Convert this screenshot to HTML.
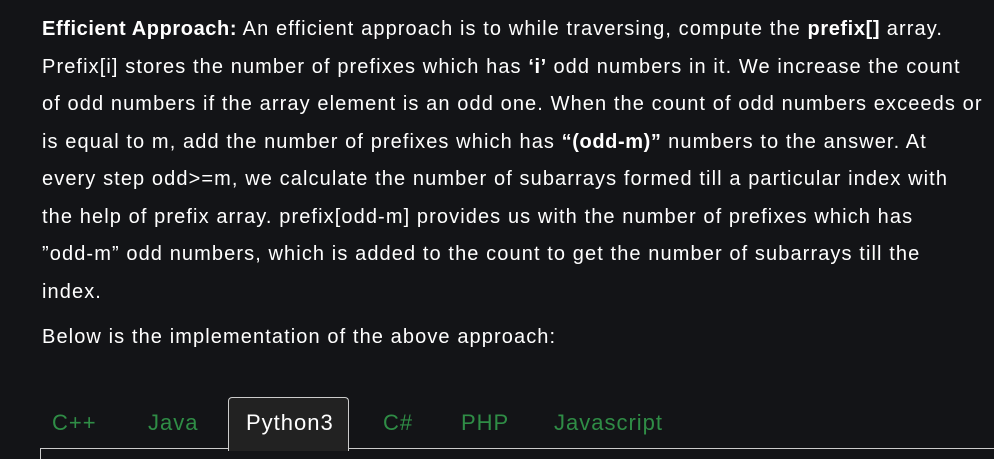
<!DOCTYPE html>
<html><head><meta charset="utf-8"><style>
html,body{margin:0;padding:0;background:#131417;width:994px;height:455px;overflow:hidden}
body{font-family:"Liberation Sans",sans-serif;color:#fff;}
.p{position:absolute;left:42px;font-size:20px;white-space:nowrap;letter-spacing:1.1px}
.l{height:37.5px;line-height:37.5px}
b{font-weight:bold;letter-spacing:0.6px}
.tab{position:absolute;top:397px;font-size:22px;color:#2f8d46;line-height:52px;letter-spacing:1px}
</style></head><body>
<div class="p" style="top:11px">
<div class="l"><b>Efficient Approach:</b> An efficient approach is to while traversing, compute the <b>prefix[]</b> array.</div>
<div class="l">Prefix[i] stores the number of prefixes which has <b>‘i’</b> odd numbers in it. We increase the count</div>
<div class="l">of odd numbers if the array element is an odd one. When the count of odd numbers exceeds or</div>
<div class="l">is equal to m, add the number of prefixes which has <b>“(odd-m)”</b> numbers to the answer. At</div>
<div class="l">every step odd&gt;=m, we calculate the number of subarrays formed till a particular index with</div>
<div class="l">the help of prefix array. prefix[odd-m] provides us with the number of prefixes which has</div>
<div class="l">”odd-m” odd numbers, which is added to the count to get the number of subarrays till the</div>
<div class="l">index.</div>
</div>
<div class="p" style="top:319px;line-height:37.5px">Below is the implementation of the above approach:</div>
<div style="position:absolute;left:40px;top:448px;width:960px;height:10px;border-top:1.5px solid #ccc;border-left:1.5px solid #ccc"></div>
<div style="position:absolute;left:228px;top:397px;width:119px;height:53px;background:#222222;border:1.5px solid #ccc;border-bottom:none;border-radius:4px 4px 0 0"></div>
<div class="tab" style="left:52px">C++</div>
<div class="tab" style="left:148px">Java</div>
<div class="tab" style="left:246px;color:#fff">Python3</div>
<div class="tab" style="left:383px">C#</div>
<div class="tab" style="left:461px">PHP</div>
<div class="tab" style="left:554px">Javascript</div>
</body></html>
